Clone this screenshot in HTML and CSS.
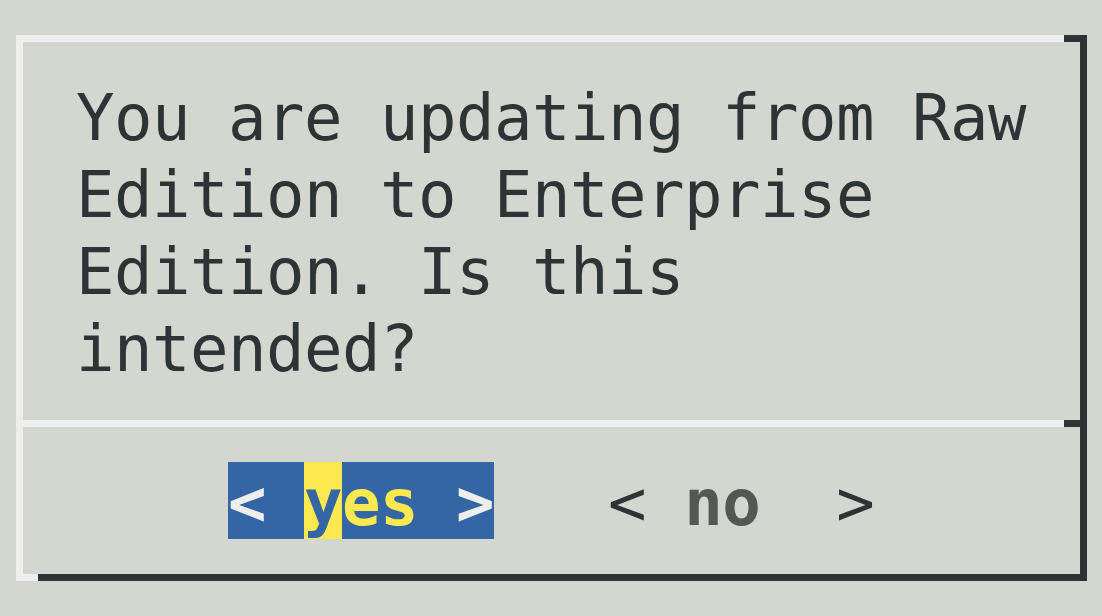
FILE: index.html
```html
<!DOCTYPE html>
<html>
<head>
<meta charset="utf-8">
<link rel="stylesheet" href="styles.css">
</head>
<body>
<div class="dialog">
  <div class="hline"><div class="light grow"></div><div class="dark cap-tr"></div></div>
  <div class="body">
    <div class="message">
      <div class="line">You are updating from Raw</div>
      <div class="line">Edition to Enterprise</div>
      <div class="line">Edition. Is this</div>
      <div class="line">intended?</div>
    </div>
    <div class="hline"><div class="light grow"></div><div class="dark cap-sep"></div></div>
    <div class="buttons">
      <div class="btn active">
        <span class="cell br">&lt;</span><span class="cell"> </span><span class="cell hot">y</span><span class="cell">es</span><span class="cell"> </span><span class="cell br">&gt;</span>
      </div>
      <div class="gap">   </div>
      <div class="btn">
        <span class="cell br">&lt;</span><span class="cell"> </span><span class="cell label">no</span><span class="cell">  </span><span class="cell br">&gt;</span>
      </div>
    </div>
  </div>
  <div class="hline"><div class="light cap-bl"></div><div class="dark grow"></div></div>
</div>
</body>
</html>
```

FILE: styles.css
```css
html, body {
  margin: 0;
  padding: 0;
  background: #d3d7cf;
  width: 1102px;
  height: 616px;
  overflow: hidden;
}
body {
  font-family: "DejaVu Sans Mono", "Liberation Mono", monospace;
  font-size: 64px;
  letter-spacing: -0.53px;
  color: #2e3436;
}
.dialog {
  margin: 35px 0 0 16px;
  width: 1071px;
}
.hline {
  display: flex;
  height: 7px;
}
.grow { flex: 1; }
.light { background: #eeeeec; }
.dark { background: #2e3436; }
.cap-tr { width: 23px; }
.cap-sep { width: 16px; }
.cap-bl { width: 22px; }
.body {
  border-left: 7px solid #eeeeec;
  border-right: 7px solid #2e3436;
}
.message {
  padding: 38px 0 32px 53px;
}
.line {
  height: 77px;
  line-height: 77px;
  white-space: pre;
}
.buttons {
  display: flex;
  padding: 35px 0 35px 205px;
}
.btn, .gap {
  display: flex;
  white-space: pre;
}
.cell, .gap {
  display: block;
  height: 77px;
  box-sizing: border-box;
  padding-top: 6px;
  line-height: 71px;
  white-space: pre;
}
.btn { font-weight: bold; }
.btn .br { color: #2e3436; font-weight: normal; }
.btn .label { color: #555753; }
.btn.active { background: #3465a4; color: #fce94f; }
.btn.active .br { color: #eeeeec; font-weight: bold; }
.btn.active .hot { background: #fce94f; color: #3465a4; }
```
